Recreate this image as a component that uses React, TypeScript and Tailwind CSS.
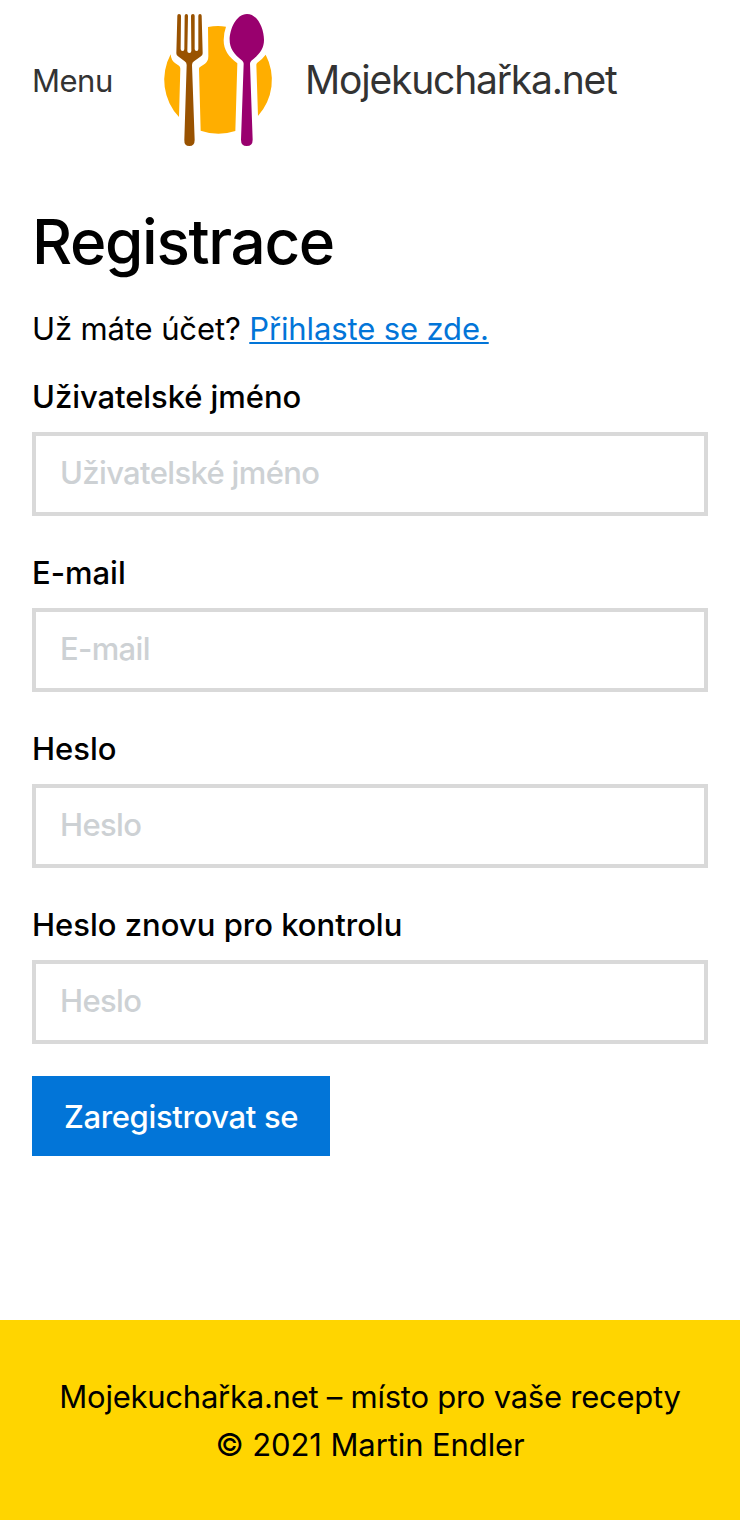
const fields = [
  { id: "username", label: "Uživatelské jméno", placeholder: "Uživatelské jméno", type: "text", tracking: "tracking-[-0.07px]" },
  { id: "email", label: "E-mail", placeholder: "E-mail", type: "email", tracking: "tracking-[-0.02px]" },
  { id: "password", label: "Heslo", placeholder: "Heslo", type: "password", tracking: "tracking-[0px]" },
  { id: "password-again", label: "Heslo znovu pro kontrolu", placeholder: "Heslo", type: "password", tracking: "tracking-[0px]" },
];

function Logo() {
  return (
    <svg className="h-40 w-[140px] shrink-0" viewBox="0 0 420 480" aria-hidden="true">
      <g fill="#ffae00">
        <path d="M62 163 Q63 181 76 190 L87 197 Q91 200 91 206 L87 351 A162 162 0 0 1 62 163Z" />
        <path d="M174 81 A162 162 0 0 1 228 80 Q221 99 221 121 C221 150 236 171 262 190 L256 393 A162 162 0 0 1 152 392 L147 206 Q147 203 150 201 L165 191 Q175 184 175 169Z" />
        <path d="M347 164 A162 162 0 0 1 324 348 L319 194 Q319 191 322 188Q337 178 347 164Z" />
      </g>
      <path
        fill="#995200"
        d="M82 47 Q82 42 87 42 Q93 42 93 47 L92 147 Q92 153 98 153 Q103 153 103 147 L104 47 Q104 42 109 42 Q114 42 114 47 L112 153 Q112 159 118 159 Q124 159 124 153 L123 47 Q123 42 129 42 Q134 42 134 47 L134 147 Q134 153 140 153 Q145 153 145 147 L145 47 Q145 42 150 42 Q155 42 155 47 L158 160 Q158 166 153 169 L132 184 Q126 188 126 195 L134 420 Q134 438 118 438 Q102 438 103 420 L110 195 Q110 188 104 184 L84 169 Q79 166 79 160Z"
      />
      <path
        fill="#99006e"
        d="M291 42 C324 42 342 88 342 120 C342 145 329 163 304 182 Q300 186 300 191 L308 419 Q308 438 290 438 Q273 438 273 419 L281 191 Q281 186 277 182 C252 163 239 145 239 120 C239 88 258 42 291 42Z"
      />
    </svg>
  );
}

export default function App() {
  return (
    <div className="flex min-h-[1520px] flex-col bg-white font-['Inter','Noto_Sans',sans-serif] text-[31px] leading-[48px] text-black">
      <header className="flex h-40 items-center text-[#333333]">
        <a href="#menu" className="w-[150px] shrink-0 pt-px pl-8 tracking-[-0.5px]">Menu</a>
        <Logo />
        <a href="#home" className="pl-[15px] text-[39px] tracking-[-1.2px]">Mojekuchařka.net</a>
      </header>

      <main className="flex flex-1 flex-col px-8 pt-12">
        <h1 className="text-[62px] leading-[68px] font-medium tracking-[-1.35px]">Registrace</h1>
        <p className="mt-[29px] tracking-[-0.12px]">
          Už máte účet?{" "}
          <a href="#login" className="text-[#0275d8] underline decoration-2 underline-offset-[2px]">Přihlaste se zde.</a>
        </p>
        <form className="mt-[19px] flex flex-col items-start">
          {fields.map((f) => (
            <div key={f.id} className="mb-8 flex w-full flex-col">
              <label htmlFor={f.id} className={`h-[60px] pt-px font-medium ${f.tracking}`}>{f.label}</label>
              <input
                id={f.id}
                type={f.type}
                placeholder={f.placeholder}
                className="h-[84px] w-full border-4 border-[#d9d9d9] bg-white px-6 pb-1 font-medium tracking-[-0.65px] outline-none placeholder:text-[#cdd1d4]"
              />
            </div>
          ))}
          <button type="button" className="h-20 w-[298px] bg-[#0275d8] pt-0.5 font-medium tracking-[-0.35px] text-white">Zaregistrovat se</button>
        </form>
      </main>

      <footer className="flex h-[200px] flex-col items-center justify-center bg-[#ffd500] pt-[2px] text-center">
        <p className="tracking-[-0.25px]">Mojekuchařka.net – místo pro vaše recepty</p>
        <p className="tracking-[-0.1px]">© 2021 Martin Endler</p>
      </footer>
    </div>
  );
}
